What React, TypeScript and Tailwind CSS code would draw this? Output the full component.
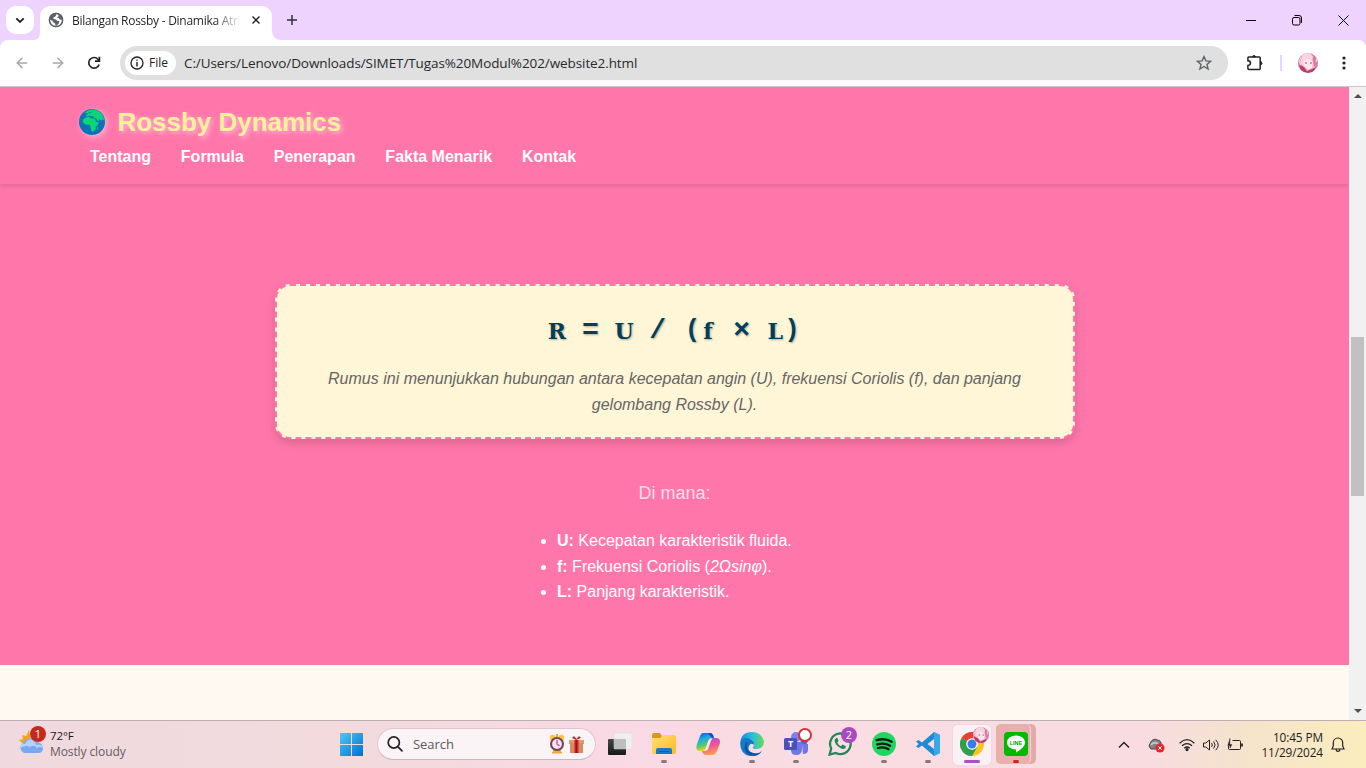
import React from "react";
import { ArrowLeft, ArrowRight } from "lucide-react";

const navItems = ["Tentang", "Formula", "Penerapan", "Fakta Menarik", "Kontak"];

function Avatar({ size = 20 }: { size?: number }) {
  return (
    <svg width={size} height={size} viewBox="0 0 20 20">
      <defs>
        <clipPath id={"av" + size}><circle cx="10" cy="10" r="10" /></clipPath>
      </defs>
      <g clipPath={`url(#av${size})`}>
        <rect width="20" height="20" fill="#f0b4cc" />
        <path d="M0 3L7 0L5 12L2 20H0zM13 0l7 4v12l-4-3z" fill="#dc7ca3" />
        <path d="M4 2Q10-2 15 3L14 9L11 5L8 8L5 13L2 10z" fill="#fbd3e1" />
        <path d="M6 8l4-3 5 4-1 6-4 2-4-4z" fill="#ffe6e9" />
        <path d="M1 12l5 2 3 4 5-2 4-2-3 6H4z" fill="#ba3f6b" />
        <path d="M7 10h2M12 10h2" stroke="#805678" strokeWidth="1.2" />
        <path d="M15 1l4 4-1 4M3 4l-2 5 2 3" stroke="#f9e5ef" fill="none" />
      </g>
    </svg>
  );
}

function TabBar() {
  return (
    <div className="flex h-10 w-full bg-[#edd3fd]">
      <div className="ml-[6px] mt-[6px] flex h-7 w-7 items-center justify-center rounded-[10px] bg-white">
        <svg width="10" height="7" viewBox="0 0 10 7" fill="none" stroke="#202124" strokeWidth="1.8"><path d="M1.3 1.3L5 5l3.7-3.7" /></svg>
      </div>
      <div className="flex h-10 w-[248px] items-end">
        <svg className="mb-0 shrink-0" width="6" height="8" viewBox="0 0 6 8"><path d="M0 8Q6 8 6 0V8z" fill="white" /></svg>
        <div className="mt-[6px] flex h-[34px] w-[232px] items-start rounded-t-[10px] bg-white pl-2 pt-[6px]">
          <svg width="16" height="16" viewBox="0 0 16 16">
            <circle cx="8" cy="8" r="7.2" fill="#5f6368" />
            <path d="M8.6 1.6L7.6 4.2 5.4 5.4 5.6 7 8 7.4 9.4 9h2l-.6 2.4L7.8 14.2 7 11.4 5.4 10.6 4.6 8.8 1.4 7.4Q1.6 12 5 14h5Q14.6 12 14.4 8l-2.6-.6L10.6 6 9 5.6 10.6 4l-.4-2z" fill="#fff" />
            <circle cx="8" cy="8" r="6.6" fill="none" stroke="#5f6368" strokeWidth="1.5" />
          </svg>
          <div className="ml-2 h-5 w-[168px] overflow-hidden whitespace-nowrap bg-gradient-to-r from-[#202124] from-85% to-transparent bg-clip-text font-['Open_Sans',sans-serif] text-[12px] leading-[17px] tracking-[-0.27px] text-transparent">Bilangan Rossby - Dinamika Atm</div>
          <svg className="ml-3 mt-1" width="8" height="8" viewBox="0 0 8 8" stroke="#202124" strokeWidth="1.4"><path d="M.5.5l7 7M7.5.5l-7 7" /></svg>
        </div>
        <svg className="shrink-0" width="10" height="10" viewBox="0 0 10 10"><path d="M0 0Q0 10 10 10H0z" fill="white" /></svg>
      </div>
      <svg className="ml-[5px] mt-[15px]" width="10" height="10" viewBox="0 0 10 10" stroke="#303034" strokeWidth="1.5"><path d="M5 0v10M0 5h10" /></svg>
      <div className="ml-auto mr-[17px] flex h-10 items-center gap-[36px]">
        <svg width="10" height="11" viewBox="0 0 10 11" stroke="#000"><path d="M0 5.5h10" /></svg>
        <svg width="10" height="11" viewBox="0 0 10 11" fill="none" stroke="#000"><rect x=".5" y="2.5" width="7.5" height="7.5" rx="1.6" /><path d="M2.5 .5H7Q9.5.5 9.5 3v4.8" /></svg>
        <svg width="11" height="11" viewBox="0 0 11 11" stroke="#000"><path d="M.5.5l10 10M10.5.5l-10 10" /></svg>
      </div>
    </div>
  );
}

function Toolbar() {
  return (
    <div className="bg-[#edd3fd]">
      <div className="flex h-[47px] items-center rounded-t-[8px] border-b border-[#c9c5cc] bg-white">
        <ArrowLeft className="ml-[14px]" size={16} color="#a5a6a8" strokeWidth={2.2} />
        <ArrowRight className="ml-5" size={16} color="#a5a6a8" strokeWidth={2.2} />
        <svg className="ml-[21px]" width="14" height="14" viewBox="0 0 14 14" fill="none" stroke="#202124" strokeWidth="1.7"><path d="M12.1 8.4A5.3 5.3 0 1 1 11 3.3L12.5 5" /><path d="M12.4.8V5.2H8" /></svg>
        <div className="ml-[19px] flex h-[34px] w-[1108px] items-center rounded-full bg-[#e0e0e0] pl-[5px]">
          <div className="flex h-6 w-[51px] items-center rounded-full bg-white pl-[5px]">
            <svg width="14" height="14" viewBox="0 0 14 14" fill="none" stroke="#202124"><circle cx="7" cy="7" r="6" strokeWidth="1.3" /><path d="M7 6v4.5M7 3.4v1.4" strokeWidth="1.4" /></svg>
            <span className="ml-[5px] font-['Open_Sans',sans-serif] text-[12px] font-medium leading-4 text-[#202124]">File</span>
          </div>
          <span className="ml-2 whitespace-nowrap font-['Open_Sans',sans-serif] text-[13.5px] leading-5 tracking-[-0.09px] text-[#28292c]">C:/Users/Lenovo/Downloads/SIMET/Tugas%20Modul%202/website2.html</span>
          <svg className="ml-auto mr-4" width="16" height="16" viewBox="0 0 16 16" fill="none" stroke="#5f6368" strokeWidth="1.4"><path d="M8 1.6l1.9 4.3 4.6.4-3.5 3.1 1.1 4.6L8 11.5 3.9 14 5 9.4 1.5 6.3l4.6-.4z" /></svg>
        </div>
        <svg className="ml-[18px]" width="18" height="18" viewBox="0 0 18 18" fill="none" stroke="#202124" strokeWidth="1.5"><path d="M2.8 3h10.5q.9 0 .9.9v10.6q0 .9-.9.9H2.8q-.9 0-.9-.9v-3q2.6-.2 2.6-2.4T1.9 6.8V3.9q0-.9.9-.9z" /><path d="M6.2 2.6q1.8-2.4 3.6 0zM14.8 7.4q2.4 1.8 0 3.6z" fill="#202124" strokeWidth="1" /></svg>
        <div className="ml-[16px] h-4 w-[2px] bg-[#edd3fd]" />
        <div className="ml-4"><Avatar /></div>
        <svg className="ml-6" width="4" height="14" viewBox="0 0 4 14" fill="#202124"><circle cx="2" cy="2" r="1.6" /><circle cx="2" cy="7" r="1.6" /><circle cx="2" cy="12" r="1.6" /></svg>
      </div>
    </div>
  );
}

function Globe() {
  return (
    <svg width="26" height="26" viewBox="0 0 26 26" className="overflow-visible drop-shadow-[2px_2px_3px_rgba(255,255,255,0.45)]">
      <circle cx="13" cy="13" r="13" fill="#0873b9" />
      <path d="M5.6 3.8Q9 .8 13 .5 21 .8 24.4 8l.6 3.4-1.8-1.2-1 1.6-1.6-1.8-1.3 2.6-2.2-3.4-2.4-.6-.4-1.4-2.2.4-1.2-1.2-1.2.8-2.6.2.4-1.6 1.5-.6-.4-1z" fill="#0cd777" />
      <path d="M6.6 8.6l4-.6 1.4 1.2 3.8.4 1.4 3.4 2.6.6-.8 2-2.4 2.4.2 2-1.8 2-1.8.8-1-1.2-.4-3-1-2.8-4.4-.4L3.6 13l.6-2.6z" fill="#0cd777" />
      <path d="M18.2 18.6l1-1.2-.4 2.8-.8.6z" fill="#0cd777" />
      <path d="M9.4 4l1.6-1 .4 1.6M12.6 3.4l1-.8" stroke="#0873b9" strokeWidth=".8" fill="none" />
    </svg>
  );
}

function Formula() {
  return (
    <div className="flex justify-center whitespace-pre text-[28px] font-bold leading-[45px] text-[#003f5c] [text-shadow:1px_1px_2px_rgba(0,0,0,0.3)]">
      {Array.from("R = U / (f × L)").map((char, i) => {
        const letter = /[A-Za-z]/.test(char);
        return (
          <span
            key={i}
            className={
              letter
                ? "flex h-[45px] w-[16.8px] justify-center font-['DejaVu_Serif',serif] text-[22px] leading-[46px]"
                : char === "("
                  ? "w-[16.8px] pl-[2px] font-['Liberation_Mono','Courier_New',monospace] text-[25px]"
                  : char === ")"
                    ? "w-[16.8px] font-['Liberation_Mono','Courier_New',monospace] text-[25px]"
                    : "w-[16.8px] font-['Liberation_Mono','Courier_New',monospace]"
            }
          >
            {char}
          </span>
        );
      })}
    </div>
  );
}

function Page() {
  return (
    <main className="flex h-[633px] overflow-hidden font-['Liberation_Sans',Arial,sans-serif]">
      <div className="w-[1349px] overflow-hidden bg-[#fff9f2]">
        <div className="h-[578px] bg-[#ff77aa]">
          <header className="h-[97px] bg-[#ff77aa] pl-[79px] pt-[22px] shadow-[0_2px_5px_rgba(0,0,0,0.12)]">
            <div className="flex h-[26px] items-center">
              <Globe />
              <h1 className="ml-[12.5px] whitespace-nowrap text-[26px] font-bold leading-[26px] tracking-[-0.02px] text-[#fff09b] [text-shadow:2px_2px_5px_rgba(255,255,255,0.5)]">Rossby Dynamics</h1>
            </div>
            <nav className="ml-[11px] mt-[9px] flex gap-[29.8px] text-base font-bold leading-[26px] text-white">
              {navItems.map((item) => <a key={item}>{item}</a>)}
            </nav>
          </header>
          <section className="flex flex-col items-center pt-[100px]">
            <div className="h-[155px] w-[800px] rounded-[15px] border-2 border-dashed border-[#ff77aa] bg-[#fff5d7] px-10 pt-[22px] text-center shadow-[0_4px_10px_rgba(0,0,0,0.15)]">
              <Formula />
              <p className="mt-[13px] text-base italic leading-[25.6px] text-[#666]">Rumus ini menunjukkan hubungan antara kecepatan angin (U), frekuensi Coriolis (f), dan panjang gelombang Rossby (L).</p>
            </div>
            <p className="mt-[40px] text-[18px] leading-[29px] text-[#ffdce9]">Di mana:</p>
            <ul className="mt-5 w-[235px] list-disc whitespace-nowrap text-base leading-[25.6px] text-white">
              <li><b>U:</b> Kecepatan karakteristik fluida.</li>
              <li><b>f:</b> Frekuensi Coriolis (<i>2Ωsinφ</i>).</li>
              <li><b>L:</b> Panjang karakteristik.</li>
            </ul>
          </section>
        </div>
      </div>
      <div className="flex w-[17px] flex-col items-center bg-[#f1f1f1] pb-[7px] pt-[7px]">
        <svg width="8" height="4" viewBox="0 0 8 4"><path d="M0 4L4 0l4 4z" fill="#505050" /></svg>
        <div className="mt-[239px] h-[159px] w-[13px] bg-[#c1c1c1]" />
        <svg className="mt-auto" width="8" height="4" viewBox="0 0 8 4"><path d="M0 0l4 4 4-4z" fill="#505050" /></svg>
      </div>
    </main>
  );
}

function AppSlot({ children, running = false }: { children: React.ReactNode; running?: boolean }) {
  return (
    <div className="flex h-[47px] w-11 shrink-0 flex-col items-center pt-[11px]">
      <div className="flex h-6 w-6">{children}</div>
      {running && <div className="mt-1 h-[3px] w-[6px] rounded-full bg-[#86797e]" />}
    </div>
  );
}

function Weather() {
  return (
    <svg width="28" height="28" viewBox="0 0 28 28">
      <path d="M1 14l4-1-1-4 4 1 3-6 2 10-7 5z" fill="#f4a51f" />
      <path d="M6 27a5 5 0 0 1-1-9 7 7 0 0 1 13-2q6 0 7 6 0 5-5 5z" fill="#78a8f2" />
      <path d="M1 23q1-6 6-5 3-7 9-3 2 2 2 4 5-2 7 3-4-2-6 0-3-4-7-1-5-3-11 2z" fill="#b3d3fc" />
      <circle cx="20" cy="8" r="8" fill="#c42b1c" />
    </svg>
  );
}

function Taskbar() {
  return (
    <footer className="flex h-12 w-full border-t border-[#bcb0b4] bg-[linear-gradient(90deg,#f0dadf_0%,#f2dadd_25%,#f9d9e4_44%,#fadde2_65%,#f8dce1_84%,#f5e3cc_91%,#fbedbd_100%)] font-['Open_Sans',sans-serif]">
      <div className="flex w-[329px] pl-[18px] pt-[5px]">
        <div className="relative h-7 w-7">
          <Weather />
          <span className="absolute left-[12px] top-0 w-4 text-center text-[11px] leading-[15px] text-white">1</span>
        </div>
        <div className="ml-1 pt-[2px] text-[12px] leading-4 tracking-[-0.1px]">
          <div className="text-[11.5px] text-[#1b1718]">72°F</div>
          <div className="text-[#655c60]">Mostly cloudy</div>
        </div>
      </div>
      <AppSlot>
        <svg className="translate-x-[0.5px]" width="24" height="24" viewBox="0 0 24 24"><defs><linearGradient id="win" x2="1" y2="1"><stop stopColor="#4bc8f5" /><stop offset="1" stopColor="#0070d0" /></linearGradient></defs><path d="M.5 1h11v11H.5zM12.5 1h11v11h-11zM.5 13h11v11H.5zM12.5 13h11v11h-11z" fill="url(#win)" /></svg>
      </AppSlot>
      <div className="ml-1 mr-[2px] mt-[7px] flex h-8 w-[219px] items-center rounded-full border border-[#dfc7cf] border-b-[#cbb8bf] bg-[#faf4f6] pl-[9px]">
        <svg width="16" height="16" viewBox="0 0 16 16" fill="none" stroke="#242124" strokeWidth="1.7"><circle cx="6.8" cy="6.5" r="5.6" /><path d="M10.8 10.6l4.2 4.2" strokeLinecap="round" /></svg>
        <span className="ml-[10px] text-[13px] leading-5 tracking-[-0.05px] text-[#5e585b]">Search</span>
        <svg className="ml-auto" width="16" height="20" viewBox="0 0 16 20"><path d="M3 18h10v1.5H3zM4 14h8v5H4z" fill="#f3aa38" /><circle cx="3.7" cy="3.7" r="3" fill="#ffc346" /><circle cx="12.3" cy="3.7" r="3" fill="#ffc346" /><path d="M7 0h2v4H7z" fill="#f4a52c" /><circle cx="8" cy="10" r="7" fill="#754550" /><circle cx="8" cy="10" r="4.9" fill="#eee5ff" /><path d="M8 6v4l2.5 2" stroke="#e23f54" strokeWidth="1.2" fill="none" /></svg>
        <svg className="ml-1 mr-[11px]" width="15" height="18" viewBox="0 0 15 18"><path d="M0 5h15v4H0z" fill="#df9b6b" /><path d="M1 8h13v10H1z" fill="#d68d5e" /><path d="M5.5 5h4v13h-4zM7 5L3 3l2-2 2.5 3L10 1l2 2z" fill="#d31f28" /><path d="M7.3 5v13" stroke="#910f17" /></svg>
      </div>
      <AppSlot>
        <svg width="24" height="24" viewBox="0 0 24 24"><defs><linearGradient id="tv" x2="0" y2="1"><stop stopColor="#454748" /><stop offset="1" stopColor="#171918" /></linearGradient></defs><rect y="7" width="18" height="16" rx="1" fill="url(#tv)" /><rect x="6" y="1" width="18" height="16" rx="1" fill="#efefef" stroke="#ddd6da" strokeWidth=".5" /><path d="M6 7h12v10H6z" fill="#bebebe" /></svg>
      </AppSlot>
      <AppSlot running>
        <svg width="24" height="24" viewBox="0 0 24 24"><defs><linearGradient id="fold" x2="1" y2="1"><stop stopColor="#ffe078" /><stop offset="1" stopColor="#ffb91d" /></linearGradient></defs><path d="M0 3q0-2 2-2h6l2 3H22v15H0z" fill="#d79b13" /><path d="M0 6h8l3-3h11q2 0 2 2v15q0 2-2 2H2q-2 0-2-2z" fill="url(#fold)" /><path d="M4 22v-4q0-2 2-2h12q2 0 2 2v4z" fill="#147cca" /><path d="M7 19h10v1H7z" fill="#0761a4" /></svg>
      </AppSlot>
      <AppSlot>
        <svg width="24" height="24" viewBox="0 0 24 24"><defs><linearGradient id="co1" x2=".3" y2="1"><stop stopColor="#154fce" /><stop offset=".4" stopColor="#19aee1" /><stop offset=".75" stopColor="#5bc86e" /><stop offset="1" stopColor="#ffd600" /></linearGradient><linearGradient id="co2" x2=".2" y2="1"><stop stopColor="#a84ee7" /><stop offset=".5" stopColor="#eb5599" /><stop offset="1" stopColor="#ff994b" /></linearGradient></defs><path d="M7 1h7q3 0 4 5h-2q-3 0-4 4l-2 6q-1 3-4 3H4Q-1 19 1 12L4 4q1-3 3-3z" fill="url(#co1)" /><path d="M17 6h3q6 0 3 8l-2 5q-2 4-5 4H10q-3 0-4-4h2q3 0 4-3l2-7q1-3 3-3z" fill="url(#co2)" /><path d="M10 1h4q3 0 4 5-3 0-4-2-1-3-4-3z" fill="#214abd" /><path d="M15 7q-2 0-3 3l-2 6q-.7 2.2-1.6 2.8h1.4q2-.4 2.8-3l2-6q.6-2 1.6-2.8z" fill="#fce7ee" /></svg>
      </AppSlot>
      <AppSlot running>
        <svg width="24" height="24" viewBox="0 0 24 24"><defs><linearGradient id="edge" x2="1"><stop stopColor="#168ad9" /><stop offset=".5" stopColor="#27bde1" /><stop offset="1" stopColor="#66db55" /></linearGradient></defs><path d="M.2 11Q1 0 12 0q9 0 12 9 0 8-8 8-4 0-3-2 3-4-1-7Q5 5 .2 11z" fill="url(#edge)" /><path d="M.2 11Q3 4 10 7q5 2 4 6-3-3-5 1-2 7 5 7 5 1 8-2Q17 25 10 24 0 22 .2 11z" fill="#137ac9" /><path d="M8 10q-4 8 5 11 5 2 9-2Q17 26 9 23 2 18 6 11z" fill="#0a54a2" /></svg>
      </AppSlot>
      <AppSlot running>
        <div className="relative h-6 w-6">
          <svg width="24" height="24" viewBox="0 0 24 24"><circle cx="12" cy="5" r="5" fill="#7881ec" /><circle cx="20" cy="9" r="3.5" fill="#5b61c5" /><path d="M7 10h11v7q0 6-6 6-5 0-5-5zM18 12h6v6q0 4-5 4z" fill="#7176e6" /><rect y="6" width="13" height="12" rx="1.5" fill="#4b51b7" /></svg>
          <span className="absolute left-0 top-[6px] w-[13px] text-center text-[9px] font-bold leading-3 text-white">T</span>
          <span className="absolute -right-1 -top-[4px] h-[14px] w-[14px] rounded-full border-2 border-[#d13438] bg-white" />
        </div>
      </AppSlot>
      <AppSlot>
        <div className="relative h-6 w-6">
          <svg width="24" height="24" viewBox="0 0 24 24" fill="none" stroke="#20875a" strokeWidth="2.3"><path d="M1.6 22.6l1.6-6.1A10.3 10.3 0 1 1 7.7 21z" /><path d="M8.3 6L6.6 7.8q0 4.2 3.9 7 4 3.2 6.6 1.7l.8-2.2-3.4-1.7-1.5 1.6q-2.9-1-3.7-3.9l1.2-1.4L9.4 6z" fill="#20875a" stroke="none" /></svg>
          <span className="absolute -right-[5px] -top-[5px] h-4 w-4 rounded-full bg-[#a94bbf] text-center text-[11px] leading-4 text-white">2</span>
        </div>
      </AppSlot>
      <AppSlot running>
        <svg width="24" height="24" viewBox="0 0 24 24"><circle cx="12" cy="12" r="12" fill="#1ed760" /><path d="M4.7 8.2q8-2.5 15 1.5M5.3 12.3q7-2 12.8 1.4M5.9 16q6-1.5 10.7 1.2" fill="none" stroke="#111b14" strokeWidth="2.3" strokeLinecap="round" /></svg>
      </AppSlot>
      <AppSlot running>
        <svg width="24" height="24" viewBox="0 0 24 24"><path d="M18 0l6 3v18l-6 3L6 13.5 2.5 16 0 14.5 2.8 12 0 9.5 2.5 8 6 10.5zM18 7l-6.5 5 6.5 5z" fill="#1e8ad4" fillRule="evenodd" /><path d="M18 0l6 3v18l-6 3z" fill="#35a9ee" /></svg>
      </AppSlot>
      <div className="ml-[3px] mt-1 flex h-10 w-[38px] flex-col items-center rounded bg-[#fbf0f3] pt-[7px] shadow-[0_0_1px_#caa9b5]">
        <div className="relative h-6 w-6">
          <svg width="24" height="24" viewBox="0 0 24 24"><circle cx="12" cy="12" r="12" fill="#fbc31b" /><path d="M12 12L1.6 6a12 12 0 0 1 20.8 0z" fill="#e64036" /><path d="M1.6 6A12 12 0 0 0 12 24l5.2-9L12 12z" fill="#2f9e4f" /><path d="M12 6.5h10.6L17 15z" fill="#fbc31b" /><circle cx="12" cy="12" r="5.8" fill="#fff" /><circle cx="12" cy="12" r="4.5" fill="#327de8" /></svg>
          <div className="absolute -right-[5px] -top-[5px]"><Avatar size={16} /></div>
        </div>
        <div className="mt-1 h-[3px] w-4 rounded-full bg-[#ac4fc2]" />
      </div>
      <div className="ml-[5px] mt-[3px] flex h-10 w-[40px] rounded-[5px] bg-[#e4aaa8]">
        <div className="flex h-10 w-[35px] flex-col items-center rounded-[5px] border-r border-[#f7d7d5] bg-[#e8b0ad] pt-2">
          <div className="relative ml-[6px] h-6 w-6">
            <svg width="24" height="24" viewBox="0 0 24 24"><rect width="24" height="24" rx="4" fill="#00b900" /><path d="M12 3.5c5.2 0 9 3 9 7 0 4.6-6 8-9 10v-3c-5-.2-9-3-9-7s4-7 9-7z" fill="white" /></svg>
            <span className="absolute left-0 top-[6px] w-6 text-center font-['Liberation_Sans',sans-serif] text-[5.5px] font-bold leading-[10px] text-[#00a500]">LINE</span>
          </div>
          <div className="ml-[6px] mt-1 h-[3px] w-[6px] shrink-0 rounded-full bg-[#c42b1c]" />
        </div>
      </div>
      <div className="ml-auto flex h-[47px] items-center pr-[21px]">
        <svg width="12" height="8" viewBox="0 0 12 8" fill="none" stroke="#252123" strokeWidth="1.4"><path d="M1 6.5L6 1.5l5 5" /></svg>
        <svg className="ml-[18px] mt-px" width="17" height="16" viewBox="0 0 17 16"><path d="M3 12Q-.5 9 2 6.5 4.5.5 9.500 3q4 .5 3.500 5v4z" fill="#828385" stroke="#46494d" /><path d="M3 8q3-4 7-1" stroke="#c1c2c3" strokeWidth="2" fill="none" /><circle cx="12" cy="11" r="4.5" fill="#e8212e" /><path d="M10.3 9.3l3.4 3.4m0-3.4l-3.4 3.4" stroke="white" /></svg>
        <svg className="ml-[14px]" width="16" height="14" viewBox="0 0 16 14" fill="none" stroke="#242124" strokeWidth="1.2"><path d="M.6 5.2q7.4-7 14.8 0M3 7.8q5-4.5 10 0M5.3 10.2q2.7-2.4 5.4 0" /><circle cx="8" cy="11.6" r="1" fill="#242124" /></svg>
        <svg className="ml-2" width="16" height="14" viewBox="0 0 16 14" fill="none" stroke="#242124"><path d="M.5 5v4h2.3L6.5 12V2L2.8 5zM8.5 5q1.6 2 0 4M10.6 3.4q3 3.6 0 7.2M12.7 1.8q5 5.2 0 10.4" /></svg>
        <svg className="ml-2" width="16" height="14" viewBox="0 0 16 14" fill="none" stroke="#242124"><path d="M5.500 2.500h7q1 0 1 1v7q0 1-1 1h-10q-1 0-1-1V8" /><path d="M15 5.500v3" strokeWidth="1.7" /><path d="M2.8.5v6h2L3 10V7.500H.8L3 1z" fill="#242124" strokeWidth=".5" /></svg>
        <div className="ml-4 w-[64px] whitespace-nowrap text-right text-[11.800px] leading-[15px] tracking-[-0.1px] text-[#211d1d]">
          <div>10:45 PM</div><div>11/29/2024</div>
        </div>
        <svg className="ml-[8px]" width="14" height="16" viewBox="0 0 14 16" fill="none" stroke="#242124" strokeWidth="1.2"><path d="M1 12l1.3-3V5.7a4.7 4.7 0 0 1 9.4 0V9l1.3 3zM5 12q.2 2.4 2 2.4T9 12" /></svg>
      </div>
    </footer>
  );
}

export default function App() {
  return (
    <div className="h-[768px] w-[1366px] overflow-hidden">
      <TabBar />
      <Toolbar />
      <Page />
      <Taskbar />
    </div>
  );
}
